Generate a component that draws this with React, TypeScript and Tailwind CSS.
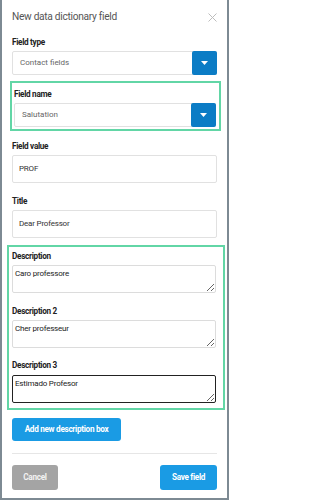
import React from "react";

function Caret() {
  return (
    <svg width="7" height="4" viewBox="0 0 7 4" className="block">
      <path d="M0 0 L7 0 L3.5 4 Z" fill="#ffffff" />
    </svg>
  );
}

function Select({ value }: { value: string }) {
  return (
    <div className="flex h-[24px] w-full border border-[#e1e1e1] rounded-[2px] bg-white">
      <div className="flex-1 flex items-center pl-[7px] text-[8px] text-[#666]">{value}</div>
      <div className="w-[25px] h-full bg-[#0b7cc5] rounded-[2px] flex items-center justify-center mt-[-1px] mb-[-1px] mr-[-1px] box-content py-[1px]">
        <Caret />
      </div>
    </div>
  );
}

function Label({ children, className = "" }: { children: React.ReactNode; className?: string }) {
  return (
    <div className={"h-[12px] leading-[12px] text-[8.2px] font-bold text-[#222] tracking-[-0.3px] " + className}>
      {children}
    </div>
  );
}

function Input({ value }: { value: string }) {
  return (
    <div className="h-[28px] w-full border border-[#e1e1e1] rounded-[2px] flex items-center pl-[6px] text-[8px] text-[#333] tracking-[-0.2px]">
      {value}
    </div>
  );
}

function Area({ value, focused = false }: { value: string; focused?: boolean }) {
  return (
    <textarea
      readOnly
      defaultValue={value}
      className={
        "block w-full h-[28px] px-[2px] pt-[2px] text-[8px] leading-[11px] tracking-[-0.2px] text-[#222] rounded-[2px] outline-none font-[Roboto,sans-serif] " +
        (focused ? "border-[1.5px] border-[#222]" : "border border-[#dcdcdc]")
      }
    />
  );
}

export default function App() {
  return (
    <div className="w-[229px] h-[500px] bg-white border-x-2 border-b-2 border-[#7d8a93] flex flex-col px-[10px] font-[Roboto,sans-serif]">
      <div className="mt-[8px] h-[18px] flex items-center justify-between">
        <span className="text-[10.2px] text-[#555] tracking-[-0.3px]">New data dictionary field</span>
        <svg width="9" height="9" viewBox="0 0 9 9" className="mr-[0px]">
          <path d="M0.5 0.5 L8.5 8.5 M8.5 0.5 L0.5 8.5" stroke="#bdbdbd" strokeWidth="1" />
        </svg>
      </div>

      <Label className="mt-[10px]">Field type</Label>
      <div className="mt-[3px]">
        <Select value="Contact fields" />
      </div>

      <div className="mt-[6px] ml-[-2px] mr-[-4px] border-2 border-[#62d6a6] pl-[2px] pr-[3px] pt-[5px] pb-[2px]">
        <Label>Field name</Label>
        <div className="mt-[3px]">
          <Select value="Salutation" />
        </div>
      </div>

      <Label className="mt-[9px]">Field value</Label>
      <div className="mt-[3px]">
        <Input value="PROF" />
      </div>

      <Label className="mt-[12px]">Title</Label>
      <div className="mt-[3px]">
        <Input value="Dear Professor" />
      </div>

      <div className="mt-[7px] ml-[-5px] mr-[-8px] border-2 border-[#62d6a6] pl-[3px] pr-[7px] pt-[3px] pb-[5px]">
        <Label>Description</Label>
        <div className="mt-[3px]">
          <Area value="Caro professore" />
        </div>
        <Label className="mt-[12px]">Description 2</Label>
        <div className="mt-[3px]">
          <Area value="Cher professeur" />
        </div>
        <Label className="mt-[11px]">Description 3</Label>
        <div className="mt-[4px]">
          <Area value="Estimado Profesor" focused />
        </div>
      </div>

      <div className="mt-[5px]">
        <button className="h-[23px] w-[109px] rounded-[3px] bg-[#1a9be4] text-white text-[8.2px] font-bold tracking-[-0.3px]">
          Add new description box
        </button>
      </div>

      <div className="mt-[12px] h-px bg-[#e6e6e6]" />

      <div className="mt-[11px] flex justify-between">
        <button className="h-[25px] w-[46px] rounded-[3px] bg-[#a4a4a4] text-[#f2f2f2] text-[8.2px] font-bold tracking-[-0.3px]">
          Cancel
        </button>
        <button className="h-[25px] w-[57px] rounded-[3px] bg-[#1a9be4] text-white text-[8.2px] font-bold tracking-[-0.3px]">
          Save field
        </button>
      </div>
    </div>
  );
}
